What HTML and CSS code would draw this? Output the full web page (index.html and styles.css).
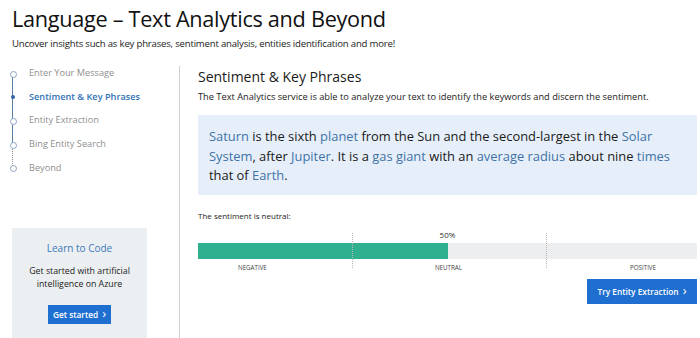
FILE: index.html
```html
<!DOCTYPE html>
<html>
<head>
<meta charset="utf-8">
<link rel="stylesheet" href="styles.css">
</head>
<body>
<header class="header">
  <h1 class="title">Language – Text Analytics and Beyond</h1>
  <p class="subtitle">Uncover insights such as key phrases, sentiment analysis, entities identification and more!</p>
</header>
<div class="main">
  <aside class="sidebar">
    <ul class="steps">
      <li class="step done">Enter Your Message</li>
      <li class="step active">Sentiment &amp; Key Phrases</li>
      <li class="step next">Entity Extraction</li>
      <li class="step next last-solid">Bing Entity Search</li>
      <li class="step future">Beyond</li>
    </ul>
    <div class="card">
      <div class="card-title">Learn to Code</div>
      <div class="card-text">Get started with artificial intelligence on Azure</div>
      <a class="btn btn-small">Get started <span class="chev">&#x203A;</span></a>
    </div>
  </aside>
  <section class="content">
    <h2 class="section-title">Sentiment &amp; Key Phrases</h2>
    <p class="desc">The Text Analytics service is able to analyze your text to identify the keywords and discern the sentiment.</p>
    <div class="quote">
      <span class="line"><span class="kw">Saturn</span> is the sixth <span class="kw">planet</span> from the Sun and the second-largest in the <span class="kw">Solar</span></span>
      <span class="line"><span class="kw">System</span>, after <span class="kw">Jupiter</span>. It is a <span class="kw">gas giant</span> with an <span class="kw">average radius</span> about nine <span class="kw">times</span></span>
      <span class="line">that of <span class="kw">Earth</span>.</span>
    </div>
    <div class="sentiment-label">The sentiment is neutral:</div>
    <div class="meter">
      <div class="pct" style="left: 50%">50%</div>
      <div class="bar"><div class="fill" style="width: 50%"></div></div>
      <div class="tick t1"></div>
      <div class="tick t2"></div>
      <div class="labels">
        <span>NEGATIVE</span>
        <span>NEUTRAL</span>
        <span>POSITIVE</span>
      </div>
    </div>
    <div class="actions">
      <a class="btn btn-large">Try Entity Extraction <span class="chev">&#x203A;</span></a>
    </div>
  </section>
</div>
</body>
</html>
```
FILE: styles.css
```css
* { box-sizing: border-box; }
html, body { margin: 0; padding: 0; background: #fff; }
body {
  font-family: "Open Sans", "Noto Sans", sans-serif;
  color: #1a1a1a;
  width: 700px;
  height: 338px;
  overflow: hidden;
}
.header { padding: 4px 0 0 12px; }
.title {
  margin: 0;
  font-size: 21.7px;
  font-weight: 400;
  line-height: 30px;
  letter-spacing: -0.3px;
  color: #111;
}
.subtitle {
  margin: 3px 0 0;
  font-size: 9.6px;
  line-height: 14px;
  letter-spacing: -0.2px;
  color: #222;
}
.main {
  display: flex;
  margin-top: 15px;
  height: 272px;
}
.sidebar {
  width: 180px;
  padding-left: 12px;
  border-right: 1px solid #cfcfcf;
  display: flex;
  flex-direction: column;
}
.steps {
  list-style: none;
  margin: 0;
  padding: 0 0 0 17px;
}
.step {
  position: relative;
  font-size: 9.2px;
  line-height: 14px;
  height: 23.7px;
  color: #8f8f8f;
}
.step::before {
  content: "";
  position: absolute;
  left: -19px;
  top: 4.5px;
  width: 5px;
  height: 5px;
  border-radius: 50%;
  border: 1px solid #8aa4bf;
  background: #fff;
  z-index: 2;
}
.step.active { color: #2f72b8; font-weight: 600; }
.step.active::before {
  border: none;
  width: 4px; height: 4px;
  left: -18px; top: 5px;
  background: #2f64a3;
}
.step::after {
  content: "";
  position: absolute;
  left: -17px;
  top: 7px;
  height: 23.7px;
  width: 0;
  border-left: 1.5px solid #5a7fa6;
  z-index: 1;
}
.step.last-solid::after { border-left: 1px dotted #8a8a8a; }
.step.future::after { display: none; }
.card {
  margin-top: 43.5px;
  width: 135px;
  flex: 1;
  background: #eceff1;
  text-align: center;
  padding-top: 13px;
  display: flex;
  flex-direction: column;
  align-items: center;
}
.card-title {
  font-size: 10px;
  color: #3a79b8;
  line-height: 14px;
}
.card-text {
  margin: 10.5px 8px 0;
  font-size: 8.8px;
  line-height: 13px;
  color: #222;
}
.btn {
  display: flex;
  align-items: center;
  justify-content: center;
  background: #1f6fd0;
  color: #fff;
  font-weight: 600;
  text-decoration: none;
}
.btn-small {
  margin-top: 13.5px;
  width: 63px;
  height: 19px;
  font-size: 8.3px;
}
.chev { font-size: 13px; font-weight: 400; margin-left: 4px; line-height: 1; position: relative; top: -1px; }
.content {
  flex: 1;
  padding: 2px 3px 0 18px;
}
.section-title {
  margin: 0;
  font-size: 14px;
  font-weight: 400;
  line-height: 18px;
  color: #1a1a1a;
}
.desc {
  margin: 4px 0 0;
  font-size: 9.25px;
  line-height: 13px;
  color: #222;
}
.quote {
  margin-top: 12px;
  background: #e6eff9;
  padding: 12px 20px 9.5px 11px;
  font-size: 12.9px;
  line-height: 19.5px;
  color: #1a1a1a;
}
.line { display: block; white-space: nowrap; }
.kw { color: #3f72a8; }
.sentiment-label {
  margin-top: 15px;
  font-size: 8px;
  line-height: 11px;
  color: #222;
}
.meter {
  position: relative;
  margin-top: 7px;
  padding-top: 15px;
  height: 48px;
}
.pct {
  position: absolute;
  top: 2px;
  transform: translateX(-50%);
  font-size: 8px;
  line-height: 10px;
  color: #333;
}
.bar {
  height: 16px;
  background: #eceeef;
}
.fill {
  height: 100%;
  background: #30b08f;
}
.tick {
  position: absolute;
  top: 5px;
  height: 35px;
  width: 0;
  border-left: 1px dotted #b8b8b8;
}
.t1 { left: 30.9%; }
.t2 { left: 69.8%; }
.labels {
  display: flex;
  justify-content: space-between;
  padding: 4px 41px 0 40px;
  font-size: 6.2px;
  line-height: 9px;
  color: #444;
}
.actions {
  display: flex;
  justify-content: flex-end;
  margin-top: 3px;
}
.btn-large {
  width: 110px;
  height: 25px;
  font-size: 8.3px;
}
```
